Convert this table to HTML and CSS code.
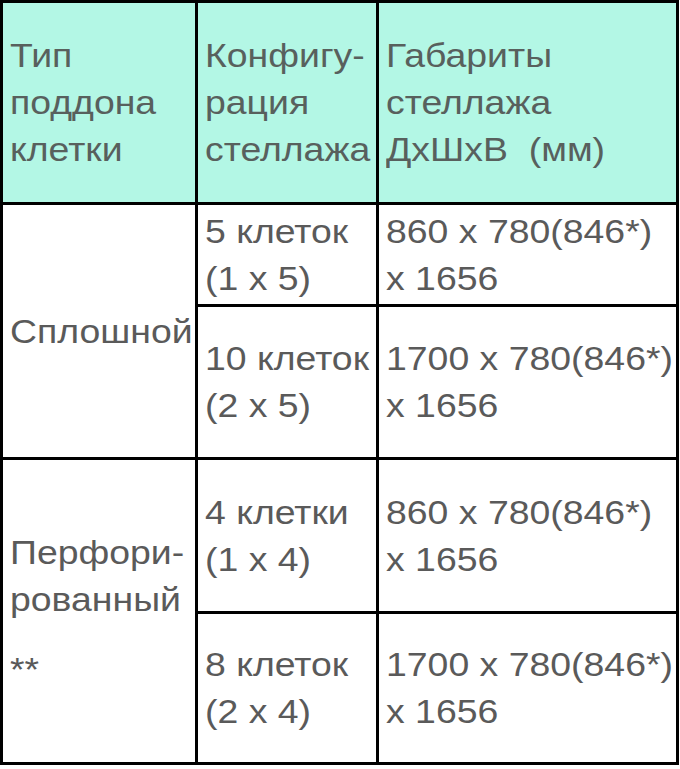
FILE: index.html
```html
<!DOCTYPE html>
<html lang="ru">
<head>
<meta charset="utf-8">
<title>Стеллажи</title>
<link rel="stylesheet" href="styles.css">
</head>
<body>
<div class="sheet">
  <div class="cell head"><div class="txt">Тип<br>поддона<br>клетки</div></div>
  <div class="cell head"><div class="txt">Конфигу-<br>рация<br>стеллажа</div></div>
  <div class="cell head"><div class="txt">Габариты<br>стеллажа<br>ДхШхВ&nbsp; (мм)</div></div>

  <div class="cell span2"><div class="txt">Сплошной</div></div>
  <div class="cell"><div class="txt">5 клеток<br>(1 x 5)</div></div>
  <div class="cell"><div class="txt">860 x 780(846*)<br>x 1656</div></div>
  <div class="cell"><div class="txt">10 клеток<br>(2 x 5)</div></div>
  <div class="cell"><div class="txt">1700 x 780(846*)<br>x 1656</div></div>

  <div class="cell span2"><div class="txt">Перфори-<br>рованный<div class="note">**</div></div></div>
  <div class="cell"><div class="txt">4 клетки<br>(1 x 4)</div></div>
  <div class="cell"><div class="txt">860 x 780(846*)<br>x 1656</div></div>
  <div class="cell"><div class="txt">8 клеток<br>(2 x 4)</div></div>
  <div class="cell"><div class="txt">1700 x 780(846*)<br>x 1656</div></div>
</div>
</body>
</html>
```
FILE: styles.css
```css
html, body {
  margin: 0;
  padding: 0;
  background: #ffffff;
}

.sheet {
  display: grid;
  grid-template-columns: 192px 178px 297px;
  grid-template-rows: 199px 99px 150px 151px 148px;
  gap: 3px;
  padding: 3px;
  background: #000000;
  width: max-content;
  font-family: "Liberation Sans", Arial, sans-serif;
  font-size: 34px;
  line-height: 47px;
  color: #5a5a5a;
}

.cell {
  background: #ffffff;
  display: flex;
  align-items: center;
  padding: 0 7px;
  overflow: hidden;
}

.head {
  background: #b3f7e5;
  color: #58605d;
}

.span2 {
  grid-row: span 2;
}

.txt {
  display: inline-block;
  white-space: nowrap;
  transform: scaleX(1.1);
  transform-origin: left center;
}

.note {
  margin-top: 23px;
}
```
